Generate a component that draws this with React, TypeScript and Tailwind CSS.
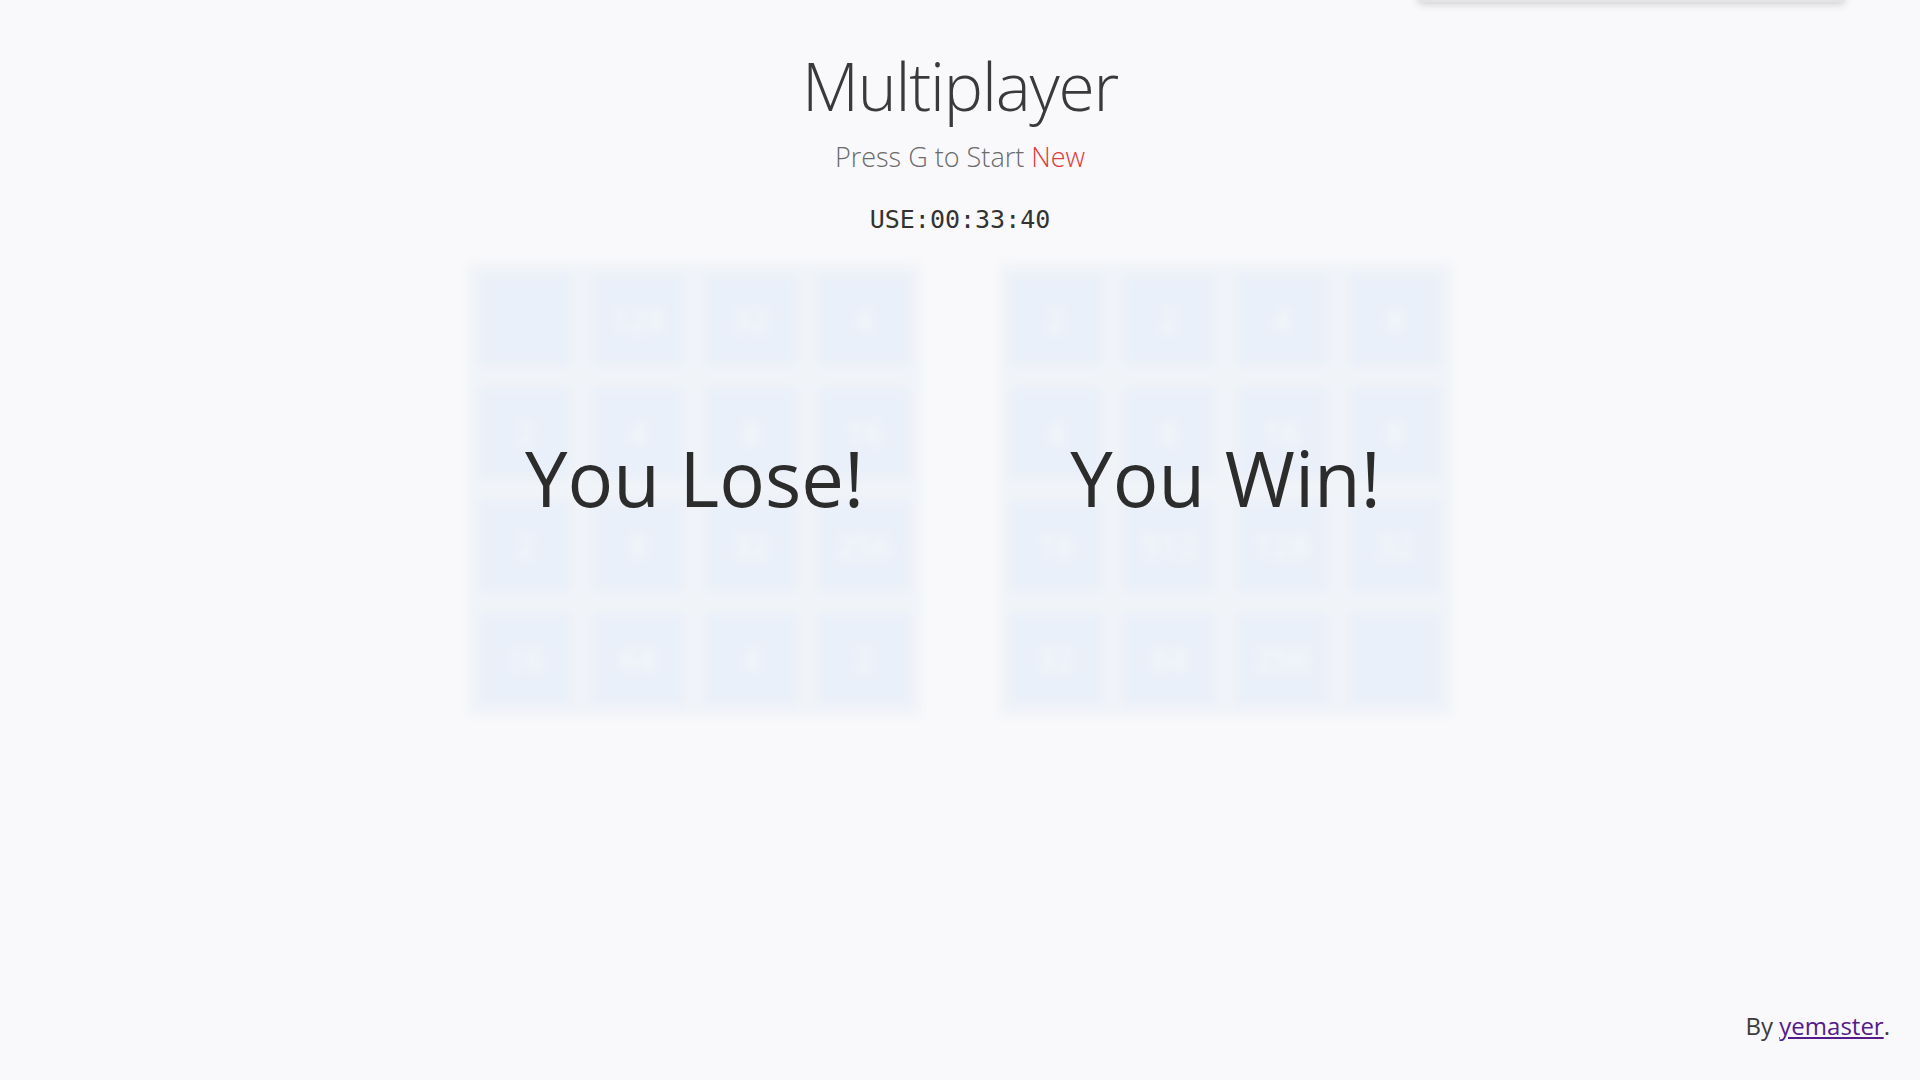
import React from "react";

const leftTiles = [0, 128, 32, 4, 2, 4, 8, 16, 2, 8, 32, 256, 16, 64, 4, 2];
const rightTiles = [2, 2, 4, 8, 4, 8, 16, 8, 16, 512, 128, 32, 32, 64, 256, 0];

function Board({ tiles, message }: { tiles: number[]; message: string }) {
  return (
    <div className="relative w-[453px] h-[453px]">
      <div className="w-full h-full rounded-[6px] bg-[#f0f3f8] p-[12px] grid grid-cols-4 grid-rows-4 gap-[23px] blur-[4px]">
        {tiles.map((v, i) => (
          <div
            key={i}
            aria-hidden="true"
            className="rounded-[4px] bg-[#eaf0f9] flex items-center justify-center text-[32px] font-semibold text-[#f4f7fb]"
            style={{ fontFamily: '"Open Sans", sans-serif' }}
          >
            {v ? v : ""}
          </div>
        ))}
      </div>
      <div className="absolute inset-0 flex items-center justify-center">
        <span
          className="text-[76px] leading-none text-[#2c2c2c] pb-[24px]"
          style={{ fontFamily: '"Open Sans", sans-serif' }}
        >
          {message}
        </span>
      </div>
    </div>
  );
}

export default function App() {
  return (
    <div
      className="relative w-[1920px] h-[1080px] overflow-hidden bg-[#f9f9fb] flex flex-col items-center"
      style={{ fontFamily: '"Open Sans", sans-serif' }}
    >
      <div className="absolute left-[1418px] top-[-100px] w-[427px] h-[102px] bg-[#e4e4e6] rounded-[4px] shadow-[0_2px_8px_rgba(0,0,0,0.18)]" />
      <h1 className="pt-[45px] text-[66px] leading-[80px] font-light text-[#3a3a3a] tracking-[-1.2px]">
        Multiplayer
      </h1>
      <p className="mt-[15px] text-[27px] leading-[34px] font-light text-[#6b6b6b]">
        Press G to Start <span className="text-[#e03a3a]">New</span>
      </p>
      <div
        className="mt-[31px] text-[25px] leading-[30px] text-[#333333]"
        style={{ fontFamily: '"DejaVu Sans Mono", monospace' }}
      >
        USE:00:33:40
      </div>
      <div className="mt-[28px] flex gap-[78px]">
        <Board tiles={leftTiles} message="You Lose!" />
        <Board tiles={rightTiles} message="You Win!" />
      </div>
      <div className="absolute right-[30px] bottom-[38px] text-[24px] leading-[32px] text-[#3c3c3c]">
        By{" "}
        <a href="#" className="text-[#551a8b] underline">
          yemaster
        </a>
        .
      </div>
    </div>
  );
}
